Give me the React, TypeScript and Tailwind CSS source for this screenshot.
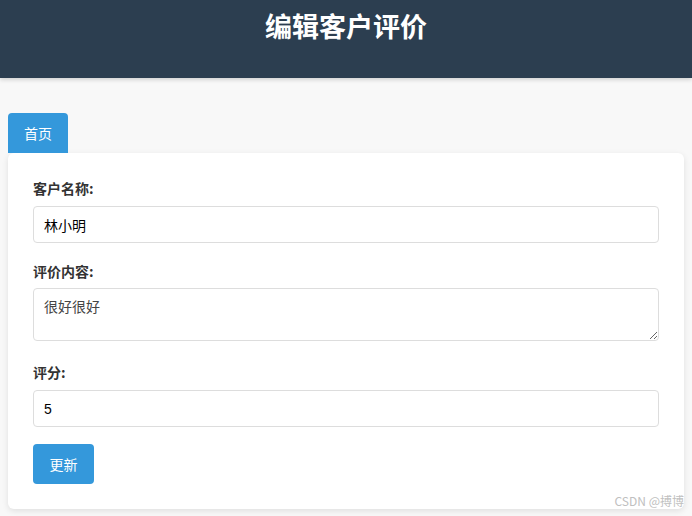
export default function App() {
  const font = { fontFamily: '"Noto Sans CJK SC", "Noto Sans", sans-serif' };
  return (
    <div
      className="relative min-h-[516px] bg-[#f8f8f8] text-[#333]"
      style={font}
    >
      {/* Header */}
      <header className="h-[78px] bg-[#2c3e50] pt-[6px] text-center shadow-[0_2px_4px_rgba(0,0,0,0.15)]">
        <h1 className="text-[27px] font-bold leading-[40px] text-white">编辑客户评价</h1>
      </header>

      <div className="px-2 pt-[35px]">
        <button className="h-[40px] w-[60px] rounded-t-[4px] rounded-b-none bg-[#3498db] text-[14px] text-white">
          首页
        </button>

        {/* Form card */}
        <div className="rounded-[6px] bg-white p-[25px] shadow-[0_2px_6px_rgba(0,0,0,0.1)]">
          <div className="mb-[18px]">
            <label className="mb-[8px] block text-[14px] font-bold leading-[20px] text-[#333]">客户名称:</label>
            <input
              className="block h-[37px] w-full rounded-[4px] border border-[#ddd] px-[10px] text-[14px] text-black outline-none"
              defaultValue="林小明"
              style={font}
            />
          </div>
          <div className="mb-[16px]">
            <label className="mb-[7px] block text-[14px] font-bold leading-[20px] text-[#333]">评价内容:</label>
            <textarea
              className="inline-block h-[53px] w-full rounded-[4px] border border-[#ddd] px-[10px] py-[7px] text-[14px] leading-[20px] text-[#444] outline-none"
              defaultValue="很好很好"
              style={font}
            />
          </div>
          <div className="mb-[17px]">
            <label className="mb-[8px] block text-[14px] font-bold leading-[20px] text-[#333]">评分:</label>
            <input
              className="block h-[37px] w-full rounded-[4px] border border-[#ddd] px-[10px] text-[14px] text-black outline-none"
              defaultValue="5"
              style={{ fontFamily: '"Liberation Sans", Arial, sans-serif' }}
            />
          </div>
          <button className="h-[40px] w-[61px] rounded-[4px] bg-[#3498db] text-[14px] text-white">
            更新
          </button>
        </div>
      </div>

      <span className="absolute bottom-[7px] right-[8px] text-[12px] leading-[16px] text-[#c0c0c0]">
        CSDN @搏博
      </span>
    </div>
  );
}
